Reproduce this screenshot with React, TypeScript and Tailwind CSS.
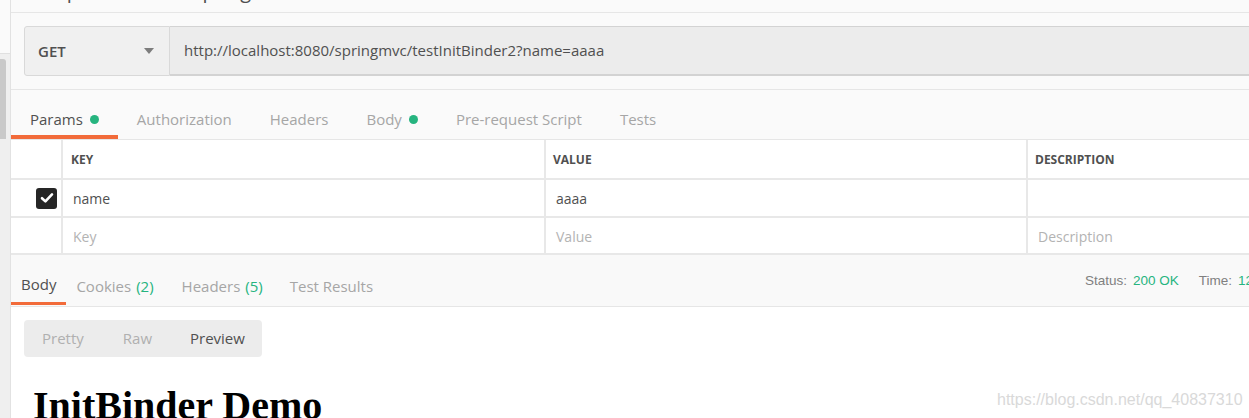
import React from "react";

const Dot = () => <span className="ml-[7px] inline-block h-[9px] w-[9px] rounded-full bg-[#26b47f]" />;

function ReqTab({ label, active, dot }: { label: string; active?: boolean; dot?: boolean }) {
  return (
    <div
      className={`flex h-[49px] items-center border-b-4 px-[19px] pt-[13px] text-[15px] ${
        active ? "border-[#f26b3a] text-[#505050]" : "border-transparent text-[#a6a6a6]"
      }`}
    >
      <span>{label}</span>
      {dot && <Dot />}
    </div>
  );
}

function Check() {
  return (
    <div className="flex h-[21px] w-[21px] items-center justify-center rounded-[3px] bg-[#262626]">
      <svg width="14" height="12" viewBox="0 0 14 12">
        <path d="M2 6.2 L5.4 9.4 L12 2.4" fill="none" stroke="#ffffff" strokeWidth="2.6" strokeLinecap="round" strokeLinejoin="round" />
      </svg>
    </div>
  );
}

export default function App() {
  return (
    <div className="relative flex h-[418px] w-[1249px] overflow-hidden bg-[#fafafa] font-['Open_Sans',sans-serif] text-[#505050]">
      {/* left strip */}
      <div className="flex w-[11px] shrink-0 flex-col border-r border-[#e2e2e2] bg-[#efefef]">
        <div className="h-[54px] shrink-0 border-b border-[#e0e0e0] bg-[#fafafa]" />
        <div className="mt-[5px] h-[80px] w-[6px] rounded-tr-[3px] bg-[#c9c9c9]" />
      </div>

      {/* main */}
      <div className="flex min-w-0 flex-1 flex-col">
        <div className="h-[13px] shrink-0 overflow-hidden border-b border-[#e6e6e6]">
          <div className="mt-[-19px] whitespace-nowrap pl-[15px] text-[20px] leading-[20px] text-[#505050]">
            Temp InitBinder - springmvc
          </div>
        </div>

        {/* url bar */}
        <div className="shrink-0 pl-[13px] pt-[13px]">
          <div className="flex h-[50px]">
            <div className="flex w-[146px] shrink-0 items-center justify-between rounded-l-[3px] border border-[#d9d9d9] bg-[#f0f0f0] pl-[13px] pr-[15px]">
              <span className="text-[15px] font-semibold text-[#505050]">GET</span>
              <svg width="10" height="6" viewBox="0 0 10 6">
                <path d="M0 0 L10 0 L5 6 Z" fill="#7d7d7d" />
              </svg>
            </div>
            <div className="flex flex-1 items-center border-b-2 border-t border-[#d3d3d3] bg-[#ececec] pl-[14px] text-[15px] text-[#505050]">
              http://localhost:8080/springmvc/testInitBinder2?name=aaaa
            </div>
          </div>
        </div>

        <div className="mt-[13px] h-px shrink-0 bg-[#e6e6e6]" />

        {/* request tabs */}
        <div className="flex h-[49px] shrink-0">
          <ReqTab label="Params" active dot />
          <ReqTab label="Authorization" />
          <ReqTab label="Headers" />
          <ReqTab label="Body" dot />
          <ReqTab label="Pre-request Script" />
          <ReqTab label="Tests" />
        </div>

        {/* params table */}
        <div className="shrink-0 border-t border-[#e6e6e6] bg-white">
          <div className="grid h-[40px] grid-cols-[52px_483px_482px_1fr] border-b-2 border-[#e8e8e8] text-[12px] font-bold text-[#505050]">
            <div className="border-r-2 border-[#e8e8e8]" />
            <div className="flex items-center border-r-2 border-[#e8e8e8] pl-[8px] pt-[1px]">KEY</div>
            <div className="flex items-center border-r-2 border-[#e8e8e8] pl-[7px] pt-[1px]">VALUE</div>
            <div className="flex items-center pl-[7px] pt-[1px]">DESCRIPTION</div>
          </div>
          <div className="grid h-[38px] grid-cols-[52px_483px_482px_1fr] border-b-2 border-[#e8e8e8] text-[14px]">
            <div className="flex items-center justify-end border-r-2 border-[#e8e8e8] pr-[4px]">
              <Check />
            </div>
            <div className="flex items-center border-r-2 border-[#e8e8e8] pl-[10px] text-[#505050]">name</div>
            <div className="flex items-center border-r-2 border-[#e8e8e8] pl-[10px] text-[#505050]">aaaa</div>
            <div />
          </div>
          <div className="grid h-[37px] grid-cols-[52px_483px_482px_1fr] border-b-2 border-[#e8e8e8] text-[14px] text-[#b3b3b3]">
            <div className="border-r-2 border-[#e8e8e8]" />
            <div className="flex items-center border-r-2 border-[#e8e8e8] pl-[10px] pt-[1px]">Key</div>
            <div className="flex items-center border-r-2 border-[#e8e8e8] pl-[10px] pt-[1px]">Value</div>
            <div className="flex items-center pl-[10px] pt-[1px]">Description</div>
          </div>
        </div>

        {/* response tabs */}
        <div className="flex h-[52px] shrink-0 items-start border-b border-[#e6e6e6] bg-[#f9f9f9] text-[15px]">
          <div className="flex h-[50px] items-center border-b-[3px] border-[#f26b3a] px-[10px] pt-[12px] text-[#505050]">Body</div>
          <div className="flex h-[50px] items-center pl-[10px] pr-[13px] pt-[12px] text-[#a6a6a6]">
            Cookies <span className="ml-[5px] text-[#26b47f]">(2)</span>
          </div>
          <div className="flex h-[50px] items-center pl-[15px] pr-[14px] pt-[12px] text-[#a6a6a6]">
            Headers <span className="ml-[5px] text-[#26b47f]">(5)</span>
          </div>
          <div className="flex h-[50px] items-center pl-[13px] pt-[12px] text-[#a6a6a6]">Test Results</div>
          <div className="ml-auto flex w-[164px] shrink-0 items-center overflow-hidden whitespace-nowrap pt-[18px] font-['Liberation_Sans',Arial,sans-serif] text-[13.5px] leading-[16px]">
            <span className="text-[#808080]">Status:</span>
            <span className="ml-[6px] text-[#26b47f]">200 OK</span>
            <span className="ml-[20px] text-[#808080]">Time:</span>
            <span className="ml-[6px] text-[#26b47f]">123 ms</span>
          </div>
        </div>

        {/* response body */}
        <div className="flex-1 bg-white pl-[13px] pt-[13px]">
          <div className="flex h-[37px] w-[238px] items-center rounded-[4px] bg-[#ececec] text-[15px]">
            <span className="pl-[18px] text-[#b0b0b0]">Pretty</span>
            <span className="pl-[39px] text-[#b0b0b0]">Raw</span>
            <span className="pl-[38px] text-[#505050]">Preview</span>
          </div>
          <h1 className="ml-[9px] mt-[29px] whitespace-nowrap font-['Liberation_Serif','Times_New_Roman',serif] text-[40px] font-bold leading-[40px] text-black">
            InitBinder Demo
          </h1>
        </div>
      </div>

      <div className="pointer-events-none absolute left-[997px] top-[391px] whitespace-nowrap font-['Liberation_Sans',Arial,sans-serif] text-[16px] leading-[18px] text-[#d9d9d9]">
        https://blog.csdn.net/qq_40837310
      </div>
    </div>
  );
}
